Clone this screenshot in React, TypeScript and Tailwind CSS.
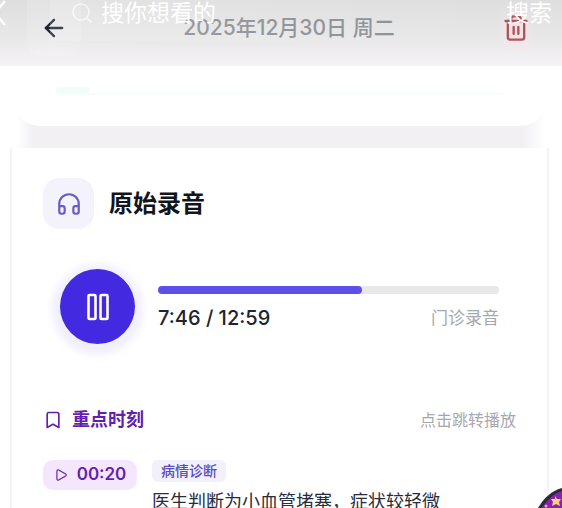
import { useState } from "react";
import { ArrowLeft, Bookmark, Headphones, Play, Search, Trash2 } from "lucide-react";

const DURATION = 779;

const moments = [{ time: "00:20", tag: "病情诊断", text: "医生判断为小血管堵塞，症状较轻微" }];

function clock(s: number) {
  return `${Math.floor(s / 60)}:${String(s % 60).padStart(2, "0")}`;
}

// Translucent search bar floating over the record header.
function SearchOverlay() {
  return (
    <div className="absolute inset-x-0 -top-4 z-10 flex h-[57px] items-center text-white">
      <button aria-label="关闭" className="w-[50px]">
        <svg viewBox="0 0 16 28" className="-ml-2 h-7 w-4" fill="none" stroke="currentColor" strokeWidth="2.5">
          <path d="M13 2 3 14l10 12" />
        </svg>
      </button>
      <label className="flex h-full flex-1 items-center gap-[7px] bg-linear-to-r from-white/15 to-transparent pl-5">
        <Search className="size-6 shrink-0 opacity-70" strokeWidth={1.5} />
        <input
          aria-label="搜索内容"
          placeholder="搜你想看的"
          className="w-full bg-transparent text-[23px] leading-7 outline-none placeholder:text-white"
        />
      </label>
      <button className="pr-[10px] text-[23px] leading-7">搜索</button>
    </div>
  );
}

function Header() {
  return (
    <header className="grid h-[66px] grid-cols-[auto_1fr_auto] items-start bg-linear-to-b from-[#dedede] via-[#e9e8e9] via-60% to-[#f5f3f6] px-[27px] text-[#8b8e93]">
      <button aria-label="返回" className="flex h-14 w-[54px] items-center justify-center rounded-b-2xl bg-white/15 text-[#1d2330]">
        <ArrowLeft className="size-7" strokeWidth={2} />
      </button>
      <h1 className="text-center text-[21px] leading-14 font-medium">2025年12月30日 周二</h1>
      <button
        aria-label="删除"
        className="flex h-14 w-[38px] items-center justify-center bg-radial from-[#ffe4e6]/70 to-transparent to-70% text-[#b2525a]"
      >
        <Trash2 className="size-7" strokeWidth={2} />
      </button>
    </header>
  );
}

function Player() {
  const [pos, setPos] = useState(466);
  const [playing, setPlaying] = useState(true);
  return (
    <div className="mt-10 flex items-center gap-[23px] px-[17px]">
      <button
        aria-label={playing ? "暂停" : "播放"}
        onClick={() => setPlaying(!playing)}
        className="flex size-[75px] shrink-0 items-center justify-center rounded-full bg-[#4329df] text-white shadow-[0_3px_8px_8px_#f1eefd]"
      >
        {playing ? (
          <svg viewBox="0 0 24 28" className="h-7 w-6" fill="none" stroke="currentColor" strokeWidth="2.6">
            <rect x="2.5" y="2" width="7" height="24" rx="1" />
            <rect x="14.5" y="2" width="7" height="24" rx="1" />
          </svg>
        ) : (
          <Play className="size-7" />
        )}
      </button>
      <div className="flex-1 pt-1">
        <div className="relative h-2 rounded-full bg-[#e8e8e8]">
          <div className="h-2 rounded-full bg-[#5d50e8]" style={{ width: `${(pos / DURATION) * 100}%` }} />
          <input
            type="range"
            aria-label="播放进度"
            min={0}
            max={DURATION}
            value={pos}
            onChange={(e) => setPos(Number(e.target.value))}
            className="absolute inset-0 h-2 w-full cursor-pointer opacity-0"
          />
        </div>
        <div className="mt-[10px] flex items-center justify-between leading-7">
          <span className="text-[20px] leading-7 font-medium text-[#20242f]">
            {clock(pos)} / {clock(DURATION)}
          </span>
          <span className="text-[17px] text-[#a6a8ad]">门诊录音</span>
        </div>
      </div>
    </div>
  );
}

export default function App() {
  return (
    <div className="relative h-screen overflow-hidden bg-white font-[Inter,'Noto_Sans_CJK_SC',sans-serif]">
      <SearchOverlay />
      <Header />
      <main>
        <div className="bg-[linear-gradient(to_right,#fff_3%,#f2f0f3_6%,#f2f0f3_93%,#fff_97%)] pr-[14px] pb-[22px] pl-3">
          <div className="h-[60px] rounded-b-[28px] bg-white px-11 pt-[21px]">
            <div className="h-2 rounded-full border-b-2 border-[#f5fefc]">
              <div className="h-1.5 w-[34px] rounded-full bg-[#f3fdf8]" />
            </div>
          </div>
        </div>
        <section className="mr-[13px] ml-[10px] border-x-2 border-[#f4f3f8] bg-white px-[31px] pt-[30px]">
          <div className="flex items-center gap-[15px]">
            <div className="flex size-[51px] items-center justify-center rounded-2xl bg-[#f4f3fb] text-[#685bc8]">
              <Headphones className="size-[26px]" strokeWidth={2} />
            </div>
            <h2 className="text-2xl font-bold text-[#11151c]">原始录音</h2>
          </div>
          <Player />
          <div className="mt-[62px] flex items-center justify-between leading-7">
            <h3 className="flex items-center gap-[9px] text-lg leading-7 font-bold text-[#641fae]">
              <Bookmark className="size-5" strokeWidth={2} />
              重点时刻
            </h3>
            <span className="text-base text-[#a6a8ad]">点击跳转播放</span>
          </div>
          <ul className="mt-[26px]">
            {moments.map((m) => (
              <li key={m.time} className="flex items-start gap-[15px]">
                <button className="flex h-[30px] w-[94px] items-center justify-center gap-[9px] rounded-[10px] bg-[#f4e7fd] text-[17px] font-semibold text-[#641fae]">
                  <Play className="size-[14px]" strokeWidth={2} />
                  {m.time}
                </button>
                <div>
                  <span className="flex h-[22px] w-fit items-center rounded-md bg-[#f2f1fb] px-[9px] text-sm font-medium text-[#574cc0]">
                    {m.tag}
                  </span>
                  <p className="mt-1.5 text-lg leading-7 text-[#292d3a]">{m.text}</p>
                </div>
              </li>
            ))}
          </ul>
        </section>
      </main>
      <svg viewBox="0 0 24 20" className="absolute right-0 bottom-0 h-5 w-6">
        <path d="M0 20C6 10 13 3 24 0v20Z" fill="#292c3b" />
        <path d="M4 20C9 12 15 6 24 3v17Z" fill="#8922ac" />
        <path d="m17 8 2 3 4 0-2 3 1 4-4-2-4 2 1-4-2-3 4 0Z" fill="#ffd277" />
        <circle cx="8" cy="18" r="1.5" fill="#f6a2ac" />
      </svg>
    </div>
  );
}
